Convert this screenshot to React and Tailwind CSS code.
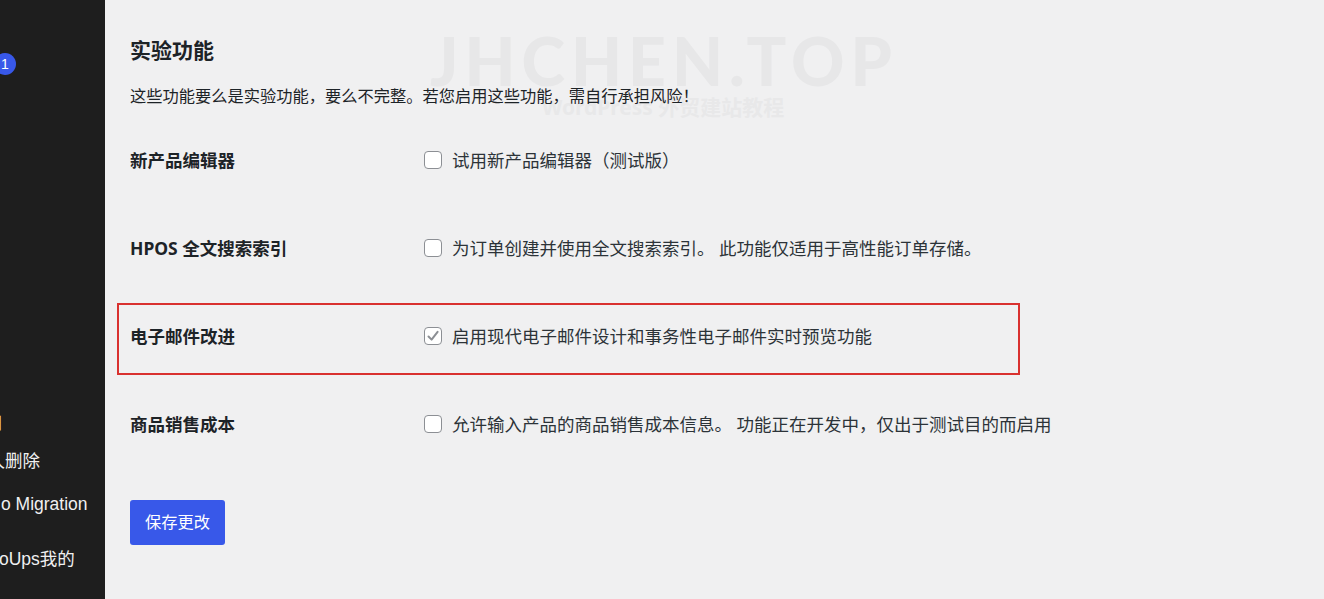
import React from "react";

const FONT = { fontFamily: '"Noto Sans", "Noto Sans CJK SC", sans-serif' };

function Box({ checked }) {
  return (
    <span className="flex h-[18px] w-[18px] shrink-0 items-center justify-center rounded-[4px] border border-[#8c8f94] bg-white">
      {checked && (
        <svg width="14" height="14" viewBox="0 0 14 14" fill="none">
          <path d="M2.5 7.5 L5.6 10.6 L11.6 2.8" stroke="#8c8f94" strokeWidth="2" strokeLinecap="round" strokeLinejoin="round" />
        </svg>
      )}
    </span>
  );
}

function Row({ label, text, checked, children }) {
  return (
    <div className="relative flex h-[88px] items-center">
      <div className="w-[294px] shrink-0 text-[17.5px] font-bold leading-[24px] text-[#1d2327]">{label}</div>
      <label className="flex items-center gap-[10px] text-[17.5px] leading-[24px] text-[#2c3338]">
        <Box checked={checked} />
        <span>{text}</span>
      </label>
      {children}
    </div>
  );
}

export default function App() {
  return (
    <div className="flex h-[599px] w-[1324px] overflow-hidden bg-[#f0f0f1]" style={FONT}>
      <aside
        className="flex w-[105px] shrink-0 flex-col overflow-hidden bg-[#1e1e1e] text-[17.5px] leading-[24px] text-[#f0f0f1]"
        style={{ fontFamily: '"Liberation Sans", "Noto Sans CJK SC", sans-serif' }}
      >
        <div className="mt-[53px] ml-[-6px] flex h-[22px] w-[22px] items-center justify-center rounded-full bg-[#3858e9] text-[14px] leading-none text-white">
          1
        </div>
        <div className="mt-[336px] ml-[-14px] whitespace-nowrap text-[#f2e19a]">日</div>
        <div className="mt-[14px] ml-[-30px] whitespace-nowrap">永久删除</div>
        <div className="mt-[19px] ml-[1px] whitespace-nowrap">o Migration</div>
        <div className="mt-[31px] ml-[-1px] whitespace-nowrap">oUps我的</div>
      </aside>

      <main className="relative flex-1 pl-[25px] pt-[36px]">
        <div className="pointer-events-none absolute left-[325px] top-[21px] select-none">
          <div className="text-[66px] font-black not-italic leading-[80px] tracking-[6px] text-[#e7e7e8]" style={{ fontFamily: 'Lato, sans-serif' }}>
            JHCHEN.TOP
          </div>
          <div className="ml-[112px] mt-[-6px] text-[21px] font-bold leading-[24px] text-[#e8e8e9]">
            WordPress 外贸建站教程
          </div>
        </div>

        <div className="relative">
          <h2 className="text-[21px] font-bold leading-[28px] text-[#1d2327]">实验功能</h2>
          <p className="mt-[20px] text-[16.25px] leading-[24px] text-[#1d2327]">
            这些功能要么是实验功能，要么不完整。若您启用这些功能，需自行承担风险！
          </p>

          <div className="mt-[8px] flex flex-col">
            <Row label="新产品编辑器" text="试用新产品编辑器（测试版）" />
            <Row label="HPOS 全文搜索索引" text="为订单创建并使用全文搜索索引。 此功能仅适用于高性能订单存储。" />
            <Row label="电子邮件改进" text="启用现代电子邮件设计和事务性电子邮件实时预览功能" checked>
              <div className="pointer-events-none absolute left-[-13px] top-[11px] h-[72px] w-[903px] border-2 border-[#d9312f]" />
            </Row>
            <Row label="商品销售成本" text="允许输入产品的商品销售成本信息。 功能正在开发中，仅出于测试目的而启用" />
          </div>

          <button className="mt-[32px] flex h-[45px] w-[95px] items-center justify-center rounded-[3px] bg-[#3858e9] text-[16.25px] text-white">
            保存更改
          </button>
        </div>
      </main>
    </div>
  );
}
